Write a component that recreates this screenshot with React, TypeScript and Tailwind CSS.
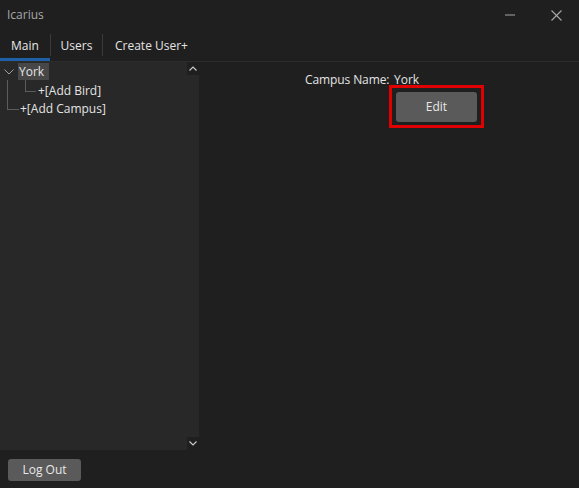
import React from "react";

export default function App() {
  const font = { fontFamily: '"Open Sans", "Noto Sans", sans-serif' };
  return (
    <div
      className="w-[579px] h-[488px] bg-[#1f1f1f] text-[#e4e4e4] text-[12px] flex flex-col overflow-hidden select-none"
      style={font}
    >
      {/* Title bar */}
      <div className="h-[30px] flex items-center justify-between">
        <span className="pl-[7px] text-[#a8a8a8] text-[12px]">Icarius</span>
        <div className="flex items-center h-full">
          <div className="w-[46px] h-full flex items-center justify-center">
            <svg width="10" height="10" viewBox="0 0 10 10">
              <line x1="0" y1="5" x2="10" y2="5" stroke="#a8a8a8" strokeWidth="1" />
            </svg>
          </div>
          <div className="w-[46px] h-full flex items-center justify-center">
            <svg width="11" height="11" viewBox="0 0 11 11">
              <line x1="0.5" y1="0.5" x2="10.5" y2="10.5" stroke="#a8a8a8" strokeWidth="1.1" />
              <line x1="10.5" y1="0.5" x2="0.5" y2="10.5" stroke="#a8a8a8" strokeWidth="1.1" />
            </svg>
          </div>
        </div>
      </div>

      {/* Tabs */}
      <div className="h-[32px] flex border-b border-[#2c2c2c]">
        <div className="w-[50px] flex flex-col">
          <div className="flex-1 flex items-center justify-center text-[#e8e8e8] pt-[3px]">Main</div>
          <div className="h-[3px] bg-[#1f5fa8]" />
        </div>
        <div className="w-px bg-[#3a3a3a] mt-[4px] mb-[5px]" />
        <div className="w-[51px] flex items-center justify-center pt-[1px]">Users</div>
        <div className="w-px bg-[#3a3a3a] mt-[4px] mb-[5px]" />
        <div className="px-[12px] flex items-center justify-center pt-[1px]">Create User+</div>
      </div>

      {/* Body */}
      <div className="flex-1 flex">
        {/* Left column */}
        <div className="w-[199px] flex flex-col">
          <div className="h-[388px] bg-[#282828] flex">
            <div className="flex-1 relative">
              {/* Tree */}
              <div className="pt-[1px]">
                <div className="flex items-center h-[17px]">
                  <div className="w-[18px] flex items-center justify-center">
                    <svg width="10" height="6" viewBox="0 0 10 6">
                      <polyline points="0.5,0.5 5,5 9.5,0.5" fill="none" stroke="#a0a0a0" strokeWidth="1" />
                    </svg>
                  </div>
                  <div className="bg-[#474747] h-[17px] flex items-center w-[31px] pl-[1px]">York</div>
                </div>
                <div className="flex items-center h-[20px] pt-[2px] pl-[24px]">
                  <div className="w-[14px] h-[18px] relative">
                    <div className="absolute left-[1px] -top-[2px] h-[12px] border-l border-b border-[#5c5c5c] w-[11px]" />
                  </div>
                  <span>+[Add Bird]</span>
                </div>
                <div className="flex items-center h-[17px] pl-[6px]">
                  <div className="w-[14px] h-[17px]" />
                  <span>+[Add Campus]</span>
                </div>
              </div>
              {/* top-level vertical line */}
              <div className="absolute left-[7px] top-[18px] h-[30px] w-[12px] border-l border-b border-[#5c5c5c]" />
            </div>
            {/* scrollbar */}
            <div className="w-[12px] flex flex-col justify-between">
              <div className="h-[13px] bg-[#1f1f1f] flex items-center justify-center">
                <svg width="8" height="5" viewBox="0 0 8 5">
                  <polyline points="0.5,4.5 4,1 7.5,4.5" fill="none" stroke="#c8c8c8" strokeWidth="1.2" />
                </svg>
              </div>
              <div className="h-[13px] bg-[#1f1f1f] flex items-center justify-center">
                <svg width="8" height="5" viewBox="0 0 8 5">
                  <polyline points="0.5,0.5 4,4 7.5,0.5" fill="none" stroke="#c8c8c8" strokeWidth="1.2" />
                </svg>
              </div>
            </div>
          </div>
          <div className="pl-[8px] pt-[9px]">
            <button className="w-[73px] h-[22px] bg-[#5a5a5a] rounded-[3px] text-[#e8e8e8] flex items-center justify-center" style={font}>
              Log Out
            </button>
          </div>
        </div>

        {/* Right content */}
        <div className="flex-1 pl-[106px] pt-[9px]">
          <div className="flex items-center h-[17px]">
            <span className="w-[89px] tracking-[-0.1px]">Campus Name:</span>
            <span>York</span>
          </div>
          <div className="ml-[84px] -mt-[3px] w-[95px] h-[43px] border-[3px] border-[#e00000] p-[4px]">
            <button className="w-[81px] h-[30px] bg-[#5a5a5a] rounded-[3px] text-[#e8e8e8] flex items-center justify-center" style={font}>
              Edit
            </button>
          </div>
        </div>
      </div>
    </div>
  );
}
